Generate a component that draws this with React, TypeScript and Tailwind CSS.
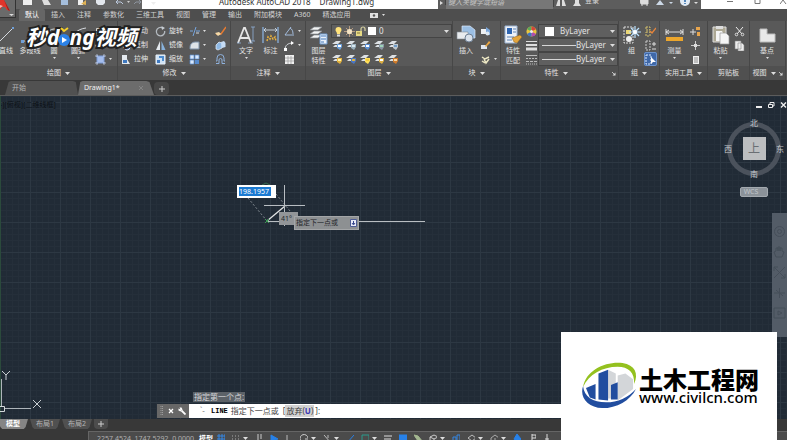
import type { ReactNode } from "react";

const UI = "font-['Noto_Sans','Noto_Sans_CJK_SC',sans-serif]";

function Svg({ w = 11, h = 11, box, children }: { w?: number; h?: number; box?: string; children: ReactNode }) {
  return (
    <svg width={w} height={h} viewBox={box ?? `0 0 ${w} ${h}`} fill="none" className="shrink-0" aria-hidden="true">
      {children}
    </svg>
  );
}

function Arrow() {
  return (
    <Svg w={5} h={3}>
      <path d="M0 0h5L2.5 3z" fill="#dedede" />
    </Svg>
  );
}

function SmallArrow() {
  return (
    <Svg w={3} h={2}>
      <path d="M0 0h3L1.5 2z" fill="#dedede" />
    </Svg>
  );
}

function Launcher() {
  return (
    <Svg w={5} h={5}>
      <path d="M1 1l2 2" stroke="#ddd" strokeWidth=".8" />
      <path d="M4.500 1.500v3h-3z" fill="#ddd" />
    </Svg>
  );
}

const icons = {
  line: <Svg w={20} h={20}><path d="M3 17L17 3" stroke="#d5d9de" /><path d="M2 16h2v2H2zM16 2h2v2h-2z" fill="#6f9fd8" /></Svg>,
  polyline: <Svg w={20} h={20}><path d="M2 16h10a5 5 0 000-10" stroke="#d5d9de" /><path d="M1 15h3v3H1z" fill="#6f9fd8" /></Svg>,
  circle: <Svg w={20} h={20}><circle cx="10" cy="11" r="7" stroke="#d5d9de" /><path d="M10 11l5-5" stroke="#6f9fd8" /></Svg>,
  arc: <Svg w={20} h={20}><path d="M3 18C3 10 9 4 18 3" stroke="#d5d9de" /><path d="M2 16h3v3H2zM7 7h3v3H7z" fill="#6f9fd8" /></Svg>,
  rect: <Svg><path d="M1.500 2.500h8v6h-8z" stroke="#d5d9de" /></Svg>,
  ellipse: <Svg><ellipse cx="5.500" cy="5.500" rx="4.500" ry="3" stroke="#d5d9de" /></Svg>,
  hatch: <Svg><path d="M2 2h7v7H2z" fill="#a5bdec" stroke="#7d9cd8" /><path d="M0 2h3M2 0v3M8 9h3M9 8v3M8 2h3M9 0v3M0 9h3M2 8v3" stroke="#c5d4f0" strokeWidth=".7" /></Svg>,
  move: <Svg><path d="M5.500 0v11M0 5.500h11M4 2l1.500-1.500L7 2M4 9l1.500 1.500L7 9M2 4L.5 5.500 2 7M9 4l1.500 1.500L9 7" stroke="#dce3ea" /></Svg>,
  copy: <Svg><circle cx="4" cy="4" r="3" stroke="#dce3ea" /><circle cx="7" cy="7" r="3" fill="#5a86c8" stroke="#dce3ea" /></Svg>,
  stretch: <Svg><path d="M2 1h5v4l3 5H2z" fill="#e4e9ee" /><path d="M3 6h4v3H3z" fill="#3f79c0" /></Svg>,
  rotate: <Svg><path d="M7.500 1.900A4.200 4.200 0 109.700 5" stroke="#b4bac0" strokeWidth="1.300" /><path d="M6.500 0l3.500 2-3 2z" fill="#c8ced5" /></Svg>,
  mirror: <Svg><path d="M5 1v9H1z" fill="#e4e9ee" /><path d="M6.500 1v9h4z" fill="#88b2dc" /></Svg>,
  scale: <Svg><path d="M1 1h9v9H1z" fill="#cfe2f5" stroke="#e9f1f9" /><path d="M4 2h5v5H7V4H4z" fill="#4d8cce" /><path d="M2 6h3v3H2z" fill="#3f79c0" /></Svg>,
  trim: <Svg><path d="M1 5h3M7 5h4M4 10L7 1" stroke="#77a6df" /><path d="M7 7h3" stroke="#d5d9de" /></Svg>,
  fillet: <Svg><path d="M1 9V7a5 5 0 015-5h4v7z" fill="#dfe4e8" stroke="#7c91a8" /></Svg>,
  array: <Svg><path d="M1 1h4v4H1zM6 1h4v4H6zM1 6h4v4H1z" fill="#d9e8fb" stroke="#578bce" strokeWidth=".7" /><path d="M6 6h4v4H6z" fill="#578bce" /></Svg>,
  erase: <Svg><path d="M1 8h5l5-7" stroke="#e77b31" strokeWidth="1.500" /><path d="M0 7l4-1 2 2-3 2z" fill="#f4d9a8" /></Svg>,
  explode: <Svg><path d="M1 5l3-3 3 1v5l-4 2-2-1z" fill="#8fb9e4" stroke="#e9f2fc" strokeWidth=".7" /><path d="M6 2l3-1 1.500 2v4L7 8z" fill="#c5dcf5" /></Svg>,
  offset: <Svg><path d="M1 9.500h3V6a1.500 1.500 0 013 0v3.500h3M1 7h1V4a3.500 3.500 0 017 0v3h1" stroke="#8fb1dc" /></Svg>,
  text: <Svg w={20} h={20}><path d="M2 18L8 3h1l6 15M4.500 13h8" stroke="#e6e6e6" strokeWidth="1.800" /><path d="M1 18h4M12 18h5M15 2h4M17 2v14M15 16h4" stroke="#8fb0d8" strokeWidth=".8" /></Svg>,
  dimension: <Svg w={20} h={20}><path d="M2 2v16M17 2v16" stroke="#8db6e6" strokeWidth="1.200" /><path d="M3 5h13M5 3L3 5l2 2M14 3l2 2-2 2" stroke="#dbe7f4" strokeWidth=".8" /><path d="M6 16l1-4 2 2 1-3 2 3 2-2 1 4" stroke="#eab23e" strokeWidth="1.500" strokeDasharray="2 1" /></Svg>,
  angle: <Svg><path d="M1 9h9M1 9l6-8M6 2c2 1 3 3 3 6" stroke="#a9c5e9" strokeWidth=".9" /></Svg>,
  leader: <Svg><path d="M1 10C1 5 4 3 9 3" stroke="#d5d9de" /><path d="M7 1l3 2-3 2zM0 8h3v3H0z" fill="#fff" /></Svg>,
  table: <Svg><path d="M1 1h9v9H1z" fill="#f0f0f0" /><path d="M1 4h9M1 7h9M4 2v8M7 2v8" stroke="#999" strokeWidth=".7" /></Svg>,
  layers: <Svg w={20} h={20}><path d="M1 5l4-3h8l-4 3zM1 9l4-3h8L9 9zM1 13l4-3h8l-4 3z" fill="#f3f4f4" stroke="#858a8f" strokeWidth=".7" /><path d="M11 9h7v10h-7z" fill="#eaf1fb" stroke="#6f9bd0" /><path d="M12 11h5M12 14h5M12 17h3" stroke="#4278b9" /></Svg>,
  bulb: <Svg><path d="M2.500 4a3 3 0 116 0c0 1.500-1.500 2-1.500 4H4c0-2-1.500-2.500-1.500-4z" fill="#ffe27a" /><path d="M4 8.500h3v2H4z" fill="#ddd" /></Svg>,
  sun: <Svg><path d="M5.500 0v11M0 5.500h11M2 2l7 7M9 2L2 9" stroke="#c9a888" strokeWidth=".8" /><circle cx="5.500" cy="5.500" r="2.600" fill="#f3e3c4" /></Svg>,
  lock: <Svg><path d="M6 5V3a2 2 0 014 0v2" stroke="#d5d0a0" strokeWidth="1.200" /><path d="M1 5h6v5H1z" fill="#e6d984" /><path d="M2 7h3" stroke="#817436" /></Svg>,
  insert: <Svg w={20} h={20}><path d="M6 1h8l5 4v8H6z" fill="#9bbfe4" stroke="#dceafb" strokeWidth=".7" /><path d="M1 7h11v7H1z" fill="#e8ebee" stroke="#828a94" strokeWidth=".6" /><circle cx="13" cy="13" r="4" fill="#d9e1ea" stroke="#6e8094" /></Svg>,
  block1: <Svg><path d="M1 3h6v5H1z" fill="#eef1f4" /><path d="M6 1l4 3v5H6z" fill="#7ba6d8" /><circle cx="7.500" cy="7.500" r="2" fill="#dde7f1" /></Svg>,
  block2: <Svg><path d="M1 5h6v4H1z" fill="#dfe7f0" /><path d="M5 6l4-5 1.500 1.500L6 7z" fill="#e8a541" /></Svg>,
  block3: <Svg><path d="M2 3l3 2 4-2M4 5l2 4 3-4M2 7l3 2" stroke="#ece7c3" strokeWidth="1.500" /></Svg>,
  match: <Svg w={20} h={20}><path d="M2 1h12v17H2z" fill="#eef2f8" stroke="#9cb5d5" /><path d="M4 3h5v6H4z" fill="#2f66b2" /><path d="M10 4h3M10 7h3M4 12h7M4 15h5" stroke="#5c83b6" /><path d="M9 13l8-3 2 2-5 6-3-1z" fill="#e4a53c" stroke="#8b5f19" strokeWidth=".5" /></Svg>,
  wheel: <Svg><circle cx="5.500" cy="5.500" r="5" fill="#e9c53f" /><path d="M5.500 5.500L1 3.300A5 5 0 015.500.5z" fill="#59a85d" /><path d="M5.500 5.500V.5A5 5 0 0110 3.300z" fill="#d6443c" /><path d="M5.500 5.500L10 8A5 5 0 015.500 10.500z" fill="#b04bb2" /><path d="M5.500 5.500v5A5 5 0 011 8z" fill="#3e74c5" /><circle cx="5.500" cy="5.500" r="1.500" fill="#eee" /></Svg>,
  weights: <Svg><path d="M0 1.500h11" stroke="#ddd" /><path d="M0 5h11" stroke="#ddd" strokeWidth="2" /><path d="M0 9h11" stroke="#ddd" strokeWidth="3" /></Svg>,
  dashes: <Svg><path d="M0 1.500h11" stroke="#bbb" /><path d="M0 4.500h11" stroke="#bbb" strokeDasharray="2 1" /><path d="M0 7.500h11" stroke="#bbb" strokeDasharray="3 1" /><path d="M0 10h11" stroke="#bbb" strokeDasharray="1 1" /></Svg>,
  group: <Svg w={20} h={20}><path d="M2 2h9v16H2z" stroke="#ddd" strokeDasharray="2 1" /><path d="M4 5h5v4H4z" fill="#ead675" /><circle cx="7" cy="14" r="3" fill="#eee" /><path d="M13 1v12M7 7h12M9 3l8 8M17 3l-8 8" stroke="#b9e1ff" strokeWidth="1.200" /><circle cx="13" cy="7" r="2" fill="#fff" /></Svg>,
  ungroup: <Svg><path d="M1 1h4v3H1zM1 6h4v4H1z" stroke="#d6c26c" strokeDasharray="2 1" /><path d="M5 5l2 2 4-5" stroke="#e8853a" strokeWidth="1.300" /></Svg>,
  groupEdit: <Svg><path d="M1 1h4v9H1z" stroke="#ccc" strokeDasharray="2 1" /><path d="M7 4h4M9 2v4M7 9h4" stroke="#ddd" /></Svg>,
  groupPick: <Svg><path d="M1 1h5v9H1z" stroke="#dceaff" strokeDasharray="2 1" /><path d="M6 3v7l2-2h3z" fill="#fff" /></Svg>,
  measure: <Svg w={20} h={20}><path d="M1 4v6M18 4v6M1 7h17M4 5L1 7l3 2M15 5l3 2-3 2" stroke="#ddd" /><path d="M1 12h17v4H1z" fill="#eca62c" /></Svg>,
  select: <Svg><path d="M0 6h6M3 3v6" stroke="#ddd" /><path d="M6 1h4v3H6zM7 6h3v4H7z" fill="#e8a54c" /></Svg>,
  point: <Svg><path d="M5.500 1v9M1 5.500h9" stroke="#ccc" /><path d="M4 4h3v3H4z" fill="#ddd" /></Svg>,
  calc: <Svg><path d="M3 2h6v8H3z" fill="#efefef" /><path d="M4 4h4M4 6h4M4 8h4" stroke="#777" strokeWidth=".8" /></Svg>,
  paste: <Svg w={20} h={20}><path d="M2 2h13v15H2z" fill="#ada894" stroke="#ddd" /><path d="M5 1h7v3H5z" fill="#ddd" /><path d="M5 6h6l1 2v8H5z" fill="#f5f5f5" /><path d="M9 8h6l3 3v8H9z" fill="#f5f5f5" stroke="#999" strokeWidth=".7" /></Svg>,
  cut: <Svg><path d="M2 1l6 7M9 1L3 8" stroke="#eee" /><circle cx="2.500" cy="8.500" r="1.300" stroke="#ddd" /><circle cx="8.500" cy="8.500" r="1.300" stroke="#ddd" /></Svg>,
  copyclip: <Svg><path d="M1 1h6v8H1zM4 3h4l2 2v6H4z" fill="#eee" stroke="#888" strokeWidth=".6" /></Svg>,
  base: <Svg w={20} h={20}><path d="M3 4h7v5h8v8H3z" fill="#e8e8e8" stroke="#bbb" /></Svg>,
};

function layerIcon(a: string, b: string) {
  return (
    <Svg>
      <path d="M0 4l4-3h5L6 4zM1 7l2-2h4L5 7z" fill="#dde1e5" />
      <path d="M5 4h5v3L8 10 5 8z" fill={a} />
      <path d="M6 5h3v2H6z" fill={b} />
    </Svg>
  );
}

const layerTools = [
  [["#6c9fd8", "#fff"], ["#9bb0bd", "#d8e6ee"], ["#5c8fd3", "#fff"], ["#8997a3", "#9ed4b8"], ["#bdc6cd", "#6f9cc9"]],
  [["#e2b13d", "#fff2a5"], ["#4c78c4", "#e1b43a"], ["#ffe05a", "#f3c93b"], ["#dcae42", "#fff"], ["#d07b2b", "#f8d9a5"]],
];

function Big({ icon, label, second, arrow, className }: { icon: ReactNode; label: string; second?: string; arrow?: boolean; className?: string }) {
  return (
    <button type="button" className={`flex shrink-0 flex-col items-center whitespace-nowrap text-[7px] leading-[10px] ${className ?? ""}`}>
      <span className="flex h-[22px] items-center">{icon}</span>
      <span>{label}</span>
      {second && <span>{second}</span>}
      {arrow && <span className="pt-px"><SmallArrow /></span>}
    </button>
  );
}

function Small({ icon, label, arrow, active }: { icon: ReactNode; label?: string; arrow?: boolean; active?: boolean }) {
  return (
    <button type="button" aria-label={label ?? "工具"} className={`flex h-[14px] items-center gap-[3px] whitespace-nowrap px-px text-[7px] leading-[10px] ${active ? "rounded-xs bg-[#3f68a8] outline-1 -outline-offset-1 outline-[#6c93cd]" : ""}`}>
      {icon}
      {label}
      {arrow && <SmallArrow />}
    </button>
  );
}

function Panel({ title, className, children, launcher, plain }: { title: string; className: string; children: ReactNode; launcher?: boolean; plain?: boolean }) {
  return (
    <section className={`flex shrink-0 flex-col border-r border-[#474747] ${className}`}>
      <div className="flex h-[45px] pt-[3px]">{children}</div>
      <div className="flex h-[14px] items-center bg-[#505050] text-[7px] leading-[10px]">
        <h2 className="flex flex-1 items-center justify-center gap-1 whitespace-nowrap">
          {title}
          {!plain && <Arrow />}
        </h2>
        {launcher && <span className="pr-[2px]"><Launcher /></span>}
      </div>
    </section>
  );
}

function PropertySelect({ label, value, kind }: { label: string; value: string; kind: "color" | "line" }) {
  return (
    <div className="flex h-[14px] items-center border border-[#444] bg-[#5f5f5f] pr-[2px]">
      {kind === "color" ? <span className="mx-[6px] size-[9px] bg-white" /> : <span className="ml-[3px] h-px w-[34px] bg-[#d6d6d6]" />}
      <select aria-label={label} className="min-w-0 flex-1 appearance-none bg-transparent text-[8px] leading-[12px] outline-none">
        <option>{value}</option>
      </select>
      <Arrow />
    </div>
  );
}

function TitleBar() {
  return (
    <header className="flex h-[9px] shrink-0 overflow-hidden bg-white">
      <div className="flex w-[142px] shrink-0 items-start gap-[10px] bg-[#656565] pl-[23px]">
        <Svg w={9} h={5}><path d="M0 0h9v5H0z" fill="#eee" /></Svg>
        <Svg w={9} h={5}><path d="M0 0h6l3 5H2z" fill="#ddd" /></Svg>
        <Svg w={7} h={5}><path d="M0 0h7v5H0z" fill="#a5bedc" /></Svg>
        <Svg w={8} h={5}><path d="M0 0h5v5H0z" fill="#eee" /><path d="M3 4l5-4v5z" fill="#e0b254" /></Svg>
        <Svg w={9} h={5}><path d="M0 0h9v3L7 5H2L0 3z" fill="#e3e7ed" /></Svg>
        <Svg w={42} h={5}><path d="M1 2h5l2 2M3 0L1 2l2 2" stroke="#bbc8dc" /><path d="M12 1h3l-1.500 2z" fill="#ccc" /><path d="M26 2h-5l-2 2M24 0l2 2-2 2" stroke="#8d949e" /><path d="M36 2h5l-2.500 3z" fill="#eee" /></Svg>
      </div>
      <h1 className="-mt-[5px] flex flex-1 gap-[9px] whitespace-pre pl-[77px] text-[8px] leading-[14px] text-[#333]">
        <span>Autodesk AutoCAD 2018</span>
        <span>Drawing1.dwg</span>
      </h1>
      <div className="flex w-[263px] shrink-0 items-start bg-[#5d5d5d] text-[7px] leading-[10px] text-[#d8d8d8]">
        <span className="w-[8px] border-r border-[#444] pl-[2px] pt-[1px]"><Svg w={3} h={4}><path d="M0 0l3 2-3 2z" fill="#ddd" /></Svg></span>
        <input aria-label="搜索" placeholder="键入关键字或短语" className="-mt-[4px] h-[13px] w-[107px] bg-[#777] pl-[2px] italic outline-none placeholder:text-[#c4c4c4]" />
        <span className="flex flex-1 gap-[7px] border-l border-[#444] pl-[2px]">
          <Svg w={10} h={6}><path d="M0 6l2-6h2v6zM6 6V0h2l2 6z" fill="#ddd" /></Svg>
          <Svg w={8} h={6}><path d="M2 0h4v3l2 3H0l2-3z" fill="#dedede" /></Svg>
          <button type="button" className="-mt-[4px] -ml-[3px] h-[10px]">登录</button>
          <span className="w-[27px]" />
          <Svg w={9} h={6}><path d="M0 0h8v4H1zM1 5h2M6 5h2" fill="#ddd" stroke="#ddd" /></Svg>
          <Svg w={17} h={6}><path d="M4 0L0 5h8zM13 2h4l-2 2z" fill="#ccd8e6" /></Svg>
          <Svg w={18} h={7}><circle cx="5" cy="1" r="5" fill="#e2ebf5" /><path d="M5 0v2M5 3v1" stroke="#2868a8" strokeWidth="1.500" /><path d="M14 2h4l-2 2z" fill="#ddd" /></Svg>
        </span>
      </div>
      <div className="flex w-[86px] shrink-0 items-start justify-between pl-[26px]">
        <button type="button" aria-label="最小化" className="flex"><Svg w={7} h={5}><path d="M0 1.500h6" stroke="#777" /></Svg></button>
        <button type="button" aria-label="还原" className="flex"><Svg w={7} h={5}><path d="M1 0v3.500h5V0" stroke="#777" /></Svg></button>
        <button type="button" aria-label="关闭" className="flex"><Svg w={7} h={5}><path d="M0 4l3-4 3 4" stroke="#777" /></Svg></button>
      </div>
    </header>
  );
}

const menus = ["默认", "插入", "注释", "参数化", "三维工具", "视图", "管理", "输出", "附加模块", "A360", "精选应用"];

function MenuTabs() {
  return (
    <nav className="flex h-[12px] shrink-0 items-stretch bg-[#4e4e4e] pl-[19px] text-[7px] leading-[12px] text-[#d2d2d2]">
      {menus.map((m, i) => (
        <button type="button" key={m} className={`whitespace-nowrap px-[6px] ${i === 0 ? "rounded-t-xs bg-[#666] text-white" : ""}`}>{m}</button>
      ))}
      <button type="button" aria-label="显示选项" className="flex items-center gap-1 pl-[13px]">
        <Svg w={8} h={5}><path d="M0 0h8v5H0z" fill="#e2e2e2" /><circle cx="4" cy="2.500" r="1.200" fill="#555" /></Svg>
        <SmallArrow />
      </button>
    </nav>
  );
}

function Ribbon() {
  return (
    <div className="flex h-[59px] shrink-0 overflow-hidden bg-[#595959] text-[#e3e3e3]">
      <Panel title="绘图" className="w-[118px]">
        <Big icon={icons.line} label="直线" className="-ml-[4px] w-[20px]" />
        <Big icon={icons.polyline} label="多段线" className="w-[28px]" />
        <Big icon={icons.circle} label="圆" arrow className="w-[20px]" />
        <Big icon={icons.arc} label="圆弧" arrow className="w-[28px]" />
        <div className="flex flex-col pl-[2px]">
          <Small icon={icons.rect} arrow />
          <Small icon={icons.ellipse} arrow />
          <Small icon={icons.hatch} arrow />
        </div>
      </Panel>
      <Panel title="修改" className="w-[113px]">
        <div className="flex w-[36px] flex-col pl-px">
          <Small icon={icons.move} label="移动" />
          <Small icon={icons.copy} label="复制" />
          <Small icon={icons.stretch} label="拉伸" />
        </div>
        <div className="flex w-[34px] flex-col">
          <Small icon={icons.rotate} label="旋转" />
          <Small icon={icons.mirror} label="镜像" />
          <Small icon={icons.scale} label="缩放" />
        </div>
        <div className="flex w-[26px] flex-col">
          <Small icon={icons.trim} arrow />
          <Small icon={icons.fillet} arrow />
          <Small icon={icons.array} arrow />
        </div>
        <div className="flex flex-col">
          <Small icon={icons.erase} />
          <Small icon={icons.explode} />
          <Small icon={icons.offset} />
        </div>
      </Panel>
      <Panel title="注释" className="w-[75px]">
        <Big icon={icons.text} label="文字" arrow className="ml-[3px] w-[24px]" />
        <Big icon={icons.dimension} label="标注" className="w-[25px]" />
        <div className="flex flex-col">
          <Small icon={icons.angle} arrow />
          <Small icon={icons.leader} arrow />
          <Small icon={icons.table} />
        </div>
      </Panel>
      <Panel title="图层" className="w-[147px]">
        <Big icon={icons.layers} label="图层" second="特性" className="w-[25px]" />
        <div className="flex flex-1 flex-col">
          <div className="flex h-[14px] items-center border border-[#444] bg-[#5f5f5f] pl-px pr-[2px]">
            {icons.bulb}{icons.sun}{icons.lock}
            <span className="mx-[2px] size-[8px] bg-white" />
            <select aria-label="图层" className="min-w-0 flex-1 appearance-none bg-transparent pl-px text-[8px] leading-[12px] outline-none">
              <option>0</option>
            </select>
            <Arrow />
          </div>
          {layerTools.map((row, r) => (
            <div key={r} className="flex h-[14px] gap-px">
              {row.map(([a, b]) => <Small key={a} icon={layerIcon(a, b)} />)}
            </div>
          ))}
        </div>
      </Panel>
      <Panel title="块" className="w-[48px]">
        <Big icon={icons.insert} label="插入" className="w-[26px]" />
        <div className="flex flex-col">
          <Small icon={icons.block1} />
          <Small icon={icons.block2} />
          <Small icon={icons.block3} arrow />
        </div>
      </Panel>
      <Panel title="特性" className="w-[118px]" launcher>
        <Big icon={icons.match} label="特性" second="匹配" className="w-[24px]" />
        <div className="flex flex-col">
          <Small icon={icons.wheel} />
          <Small icon={icons.weights} />
          <Small icon={icons.dashes} />
        </div>
        <div className="flex min-w-0 flex-1 flex-col">
          <PropertySelect label="颜色" value="ByLayer" kind="color" />
          <PropertySelect label="线宽" value="ByLayer" kind="line" />
          <PropertySelect label="线型" value="ByLayer" kind="line" />
        </div>
      </Panel>
      <Panel title="组" className="w-[41px]">
        <Big icon={icons.group} label="组" className="w-[25px]" />
        <div className="flex flex-col">
          <Small icon={icons.ungroup} />
          <Small icon={icons.groupEdit} />
          <Small icon={icons.groupPick} active />
        </div>
      </Panel>
      <Panel title="实用工具" className="w-[48px]">
        <Big icon={icons.measure} label="测量" arrow className="w-[29px]" />
        <div className="flex flex-col">
          <Small icon={icons.select} />
          <Small icon={icons.point} />
          <Small icon={icons.calc} />
        </div>
      </Panel>
      <Panel title="剪贴板" className="w-[42px]" plain>
        <Big icon={icons.paste} label="粘贴" arrow className="w-[25px]" />
        <div className="flex flex-col">
          <Small icon={icons.cut} />
          <Small icon={icons.copyclip} />
        </div>
      </Panel>
      <Panel title="视图" className="w-[36px]" launcher>
        <Big icon={icons.base} label="基点" arrow className="w-[34px]" />
      </Panel>
    </div>
  );
}

function DocumentTabs() {
  return (
    <div className="flex h-[16px] shrink-0 items-end border-b border-[#5c5c5c] bg-[#383838] pl-[5px] text-[7px] leading-[14px]">
      <button type="button" className="h-[14px] w-[73px] bg-[#515151] pl-[7px] text-left text-[#b4b4b4] [clip-path:polygon(0_100%,5%_8%,8%_0,93%_0,97%_8%,100%_100%)]">开始</button>
      <button type="button" className="flex h-[14px] w-[76px] items-center justify-between bg-[#6c6c6c] pl-[6px] pr-[11px] text-[#f2f2f2] [clip-path:polygon(0_100%,3%_8%,6%_0,90%_0,94%_8%,100%_100%)]">
        Drawing1*
        <Svg w={4} h={4}><path d="M0 0l4 4M4 0L0 4" stroke="#858585" /></Svg>
      </button>
      <button type="button" aria-label="新图形" className="flex h-[13px] w-[15px] items-center justify-center rounded-sm bg-[#484848]">
        <Svg w={6} h={6}><path d="M3 0v6M0 3h6" stroke="#ccc" /></Svg>
      </button>
    </div>
  );
}

function Drawing() {
  return (
    <svg className="absolute left-0 top-0" width="440" height="150" viewBox="0 96 440 150" fill="none" aria-hidden="true">
      <path d="M267 221.500h158" stroke="#b9bec2" />
      <path d="M267 221l18-15" stroke="#e3e5e6" strokeWidth="1.300" />
      <path d="M248 198l19 23M276 194l14 17" stroke="#9aa1a7" strokeWidth=".8" strokeDasharray="2 2" />
      <path d="M262 185l4-2 4 2" stroke="#3b7d55" strokeWidth=".8" />
      <path d="M265 219l4 4M269 219l-4 4" stroke="#3d9b55" />
      <path d="M264 205.500h41M284.500 185v41" stroke="#b8bdc2" />
    </svg>
  );
}

function ViewCube() {
  return (
    <div className="absolute right-[3px] top-[22px] flex w-[60px] flex-col items-center text-[8px] leading-[10px] text-[#c4c9cd]">
      <svg className="absolute left-[2px] top-[3px]" width="56" height="56" fill="none" aria-hidden="true">
        <circle cx="28" cy="28" r="24.500" stroke="#4b525c" strokeWidth="5" />
      </svg>
      <span className="relative">北</span>
      <div className="relative flex h-[41px] w-full items-center justify-between">
        <span>西</span>
        <button type="button" className="size-[23px] bg-[#bcbec0] text-[12px] leading-[22px] text-[#6a6e73]">上</button>
        <span>东</span>
      </div>
      <span className="relative">南</span>
      <button type="button" className="mt-[8px] h-[10px] w-[28px] rounded-xs border border-[#a3a9af] bg-[#8b9299] pr-[6px] text-[7px] leading-[8px] text-[#c0c5ca]">WCS</button>
    </div>
  );
}

function NavigationBar() {
  return (
    <div className="absolute right-0 top-[117px] flex h-[124px] w-[15px] flex-col items-center gap-[8px] bg-[#535c67] pt-[12px]">
      <Svg w={13} h={13}><circle cx="6.500" cy="6.500" r="5" stroke="#454e59" /><circle cx="6.500" cy="6.500" r="2" stroke="#454e59" /></Svg>
      <Svg w={13} h={12}><path d="M3 11L1 6l2-1V2h2v3-4h2v4-3h2v3l2 1-2 5z" stroke="#454e59" /></Svg>
      <Svg w={13} h={13}><path d="M1 1l11 11M12 1L1 12M1 5V1h4M8 12h4V8" stroke="#454e59" /></Svg>
      <Svg w={13} h={12}><path d="M1 6h11M6.500 1v10M3 3l7 6" stroke="#454e59" /></Svg>
      <Svg w={13} h={12}><path d="M1 1h11v10H1zM5 4l4 2-4 2z" stroke="#454e59" /></Svg>
    </div>
  );
}

function CommandLine() {
  return (
    <div className="absolute bottom-0 left-[157px] right-[220px] pb-px">
      <p className="mb-[2px] ml-[36px] w-fit bg-[#5c6268] px-px text-[8px] leading-[10px] text-[#d4d6d8]">指定第一个点:</p>
      <div className="flex h-[14px] bg-white">
        <div className="flex w-[32px] shrink-0 items-center justify-between bg-[#676767] px-[3px]">
          <Svg w={3} h={10}><path d="M1 0v10M2.500 0v10" stroke="#aaa" strokeWidth=".8" strokeDasharray="1 1" /></Svg>
          <button type="button" aria-label="关闭命令行"><Svg w={6} h={6}><path d="M1 1l4 4M5 1L1 5" stroke="#fff" strokeWidth="1.300" /></Svg></button>
          <button type="button" aria-label="自定义"><Svg w={8} h={8}><path d="M3.500 3.500l4 4" stroke="#fff" strokeWidth="1.800" /><path d="M.5 1.500v2l2 1 2-2-1-2h-2l1 2z" fill="#fff" /></Svg></button>
        </div>
        <label className="flex min-w-0 flex-1 items-center pl-[4px] text-[8px] leading-[12px] text-[#444]">
          <span className="w-[18px] pl-[7px] text-[#888]">`-</span>
          <span className="font-['Liberation_Mono','Noto_Sans_CJK_SC',monospace] text-[7px] font-bold text-black">LINE</span>
          <span className="whitespace-pre pl-[3px]">指定下一点或</span>
          <span className="whitespace-pre pl-[4px]">[</span>
          <span className="whitespace-pre bg-[#d2d2d2] px-px">放弃(<b className="font-bold text-[#3b3bb5]">U</b>)</span>
          <span className="pl-px">]:</span>
          <input aria-label="命令" className="min-w-0 flex-1 bg-transparent outline-none" />
        </label>
      </div>
    </div>
  );
}

function Canvas() {
  return (
    <main className="relative min-h-0 flex-1 overflow-hidden bg-[#212b36] bg-[linear-gradient(to_right,#2d3843_1px,transparent_1px),linear-gradient(to_bottom,#2d3843_1px,transparent_1px),linear-gradient(to_right,#252f3a_1px,transparent_1px),linear-gradient(to_bottom,#252f3a_1px,transparent_1px)] bg-[size:30px_30px,30px_30px,6px_6px,6px_6px] bg-[position:0px_6px]">
      <p className="absolute left-0 top-[3px] whitespace-nowrap text-[7px] leading-[12px] text-[#0c1116]">-][俯视][二维线框]</p>
      <Drawing />
      <input aria-label="长度" defaultValue="198.1957" className="absolute left-[237px] top-[89px] h-[13px] w-[39px] border-2 border-r-[5px] border-white bg-[#1b7ad2] text-[7px] leading-[9px] text-white outline-none" />
      <span className="absolute left-[279px] top-[116px] h-[13px] w-[19px] bg-[#929598] pl-[2px] text-[7px] leading-[13px] text-[#22272b]">41°</span>
      <div className="absolute left-[294px] top-[120px] flex h-[14px] w-[65px] items-center justify-between border border-[#a4a6a8] bg-[#8d9092] px-px text-[7px] leading-[12px] text-[#1e2327]">
        指定下一点或
        <Svg w={7} h={8}><path d="M.5.5h6v7h-6z" fill="#e8ebf8" stroke="#4e5c94" /><path d="M3.500 2v3M2 4l1.500 2L5 4" stroke="#35458c" /></Svg>
      </div>
      <div className="absolute right-0 top-[5px] flex items-center gap-[5px]">
        <button type="button" aria-label="最小化图形"><Svg w={7} h={8}><path d="M0 6h6" stroke="#eee" strokeWidth="2" /></Svg></button>
        <button type="button" aria-label="还原图形"><Svg w={7} h={8}><path d="M2 3V1.500h4V5H5M.5 3.500h4v3h-4z" stroke="#eee" /></Svg></button>
        <button type="button" aria-label="关闭图形"><Svg w={7} h={8}><path d="M1 1.500l5 5M6 1.500l-5 5" stroke="#eee" strokeWidth="1.400" /></Svg></button>
      </div>
      <ViewCube />
      <NavigationBar />
      <span className="absolute left-0 top-0 h-full w-px bg-[#2b4a3c]" />
      <svg className="absolute bottom-px left-0" width="46" height="48" fill="none" aria-hidden="true">
        <path d="M1.500 9v27M5 38.500h26" stroke="#aeb5ba" />
        <path d="M0 36.500h4.500v5H0" stroke="#d4d8da" />
        <path d="M2 1l4 4 4-4M6 5v5M33 30l8 8M41 30l-8 8" stroke="#c9ced2" />
      </svg>
      <CommandLine />
    </main>
  );
}

function LayoutTabs() {
  const shape = "h-[10px] w-[30px] [clip-path:polygon(0_0,100%_0,92%_80%,86%_100%,14%_100%,8%_80%)]";
  return (
    <div className="flex h-[12px] shrink-0 gap-[2px] bg-[#383838] text-[7px] leading-[10px] text-[#b5b5b5]">
      <button type="button" className={`${shape} -ml-[2px] bg-[#858585] font-bold text-white`}>模型</button>
      <button type="button" className={`${shape} bg-[#505050]`}>布局1</button>
      <button type="button" className={`${shape} bg-[#505050]`}>布局2</button>
      <button type="button" aria-label="新建布局" className="flex h-[10px] w-[14px] items-center justify-center rounded-b-sm bg-[#4c4c4c]">
        <Svg w={6} h={6}><path d="M3 0v6M0 3h6" stroke="#ccc" /></Svg>
      </button>
    </div>
  );
}

const statusIcons: { d: string; c: string; arrow?: boolean; fill?: boolean }[] = [
  { d: "M0 2h9M0 5h9M0 8h9M2 0v9M5 0v9M8 0v9", c: "#3587e4" },
  { d: "M0 2h1M3 2h1M6 2h1M0 5h1M3 5h1M6 5h1M0 8h1M3 8h1", c: "#aaa", arrow: true },
  { d: "M3 0v9M6 0v5", c: "#ccc" },
  { d: "M1 1l7 4-7 2z", c: "#2781e8", fill: true },
  { d: "M2 1v7h6", c: "#bbb" },
  { d: "M8 4a4 4 0 10-2 4M5 5h4", c: "#ccc", arrow: true },
  { d: "M1 1l7 8M5 1v3", c: "#bbb", arrow: true },
  { d: "M1 9l7-8", c: "#2781e8" },
  { d: "M1 1h7v7H1z", c: "#2b9b8c", arrow: true },
  { d: "M0 2h9M0 5h7M0 8h9", c: "#ddd" },
  { d: "M0 1h9v8H0z", c: "#2781e8", fill: true },
  { d: "M0 1l4 1 5 6-5-1z", c: "#a4b891", fill: true },
  { d: "M1 3l4-2 4 2v5H1zM1 3l4 2 4-2M5 5v4", c: "#ccc", arrow: true },
  { d: "M1 8V3h3v5M5 8V1h3v7", c: "#3587e4" },
  { d: "M1 4l4-3 4 3-4 3z", c: "#bbb", arrow: true },
  { d: "M1 4l4-3 4 3v4H1zM4 5h2", c: "#aaa", arrow: true },
  { d: "M4 0l4 5-4 4-3-4z", c: "#2781e8", fill: true },
  { d: "M4 0v9M4 1h4v3H4", c: "#ddd" },
  { d: "M4 0v9M2 5h4", c: "#ddd" },
];

function StatusBar() {
  return (
    <footer className="flex h-[9px] shrink-0 overflow-hidden bg-[#383838] pl-[88px]">
      <div className="flex flex-1 items-start border-l border-t border-[#656565] bg-[#4b4b4b] pl-[8px] pt-[2px]">
        <span className="w-[102px] shrink-0 whitespace-nowrap text-[7px] leading-[10px] text-[#b0b0b0]">2257.4524, 1747.5292, 0.0000</span>
        <button type="button" className="mr-[4px] shrink-0 text-[7px] leading-[10px] font-bold text-white">模型</button>
        <div className="flex gap-[7px]">
          {statusIcons.map((s, i) => (
            <button type="button" aria-label="状态开关" key={i} className="flex items-center gap-[3px]">
              <Svg w={8} h={9}><path d={s.d} stroke={s.c} fill={s.fill ? s.c : "none"} /></Svg>
              {s.arrow && <Arrow />}
            </button>
          ))}
        </div>
      </div>
    </footer>
  );
}

function AppMenu() {
  return (
    <button type="button" aria-label="应用程序菜单" className="absolute left-0 top-0 h-[18px] w-[16px] border-b border-r border-[#333] bg-[#6a6a6a]">
      <Svg w={15} h={17}>
        <path d="M0 0h4l6 11-3-1-2-3H2l-2 3z" fill="#e0342b" />
        <path d="M4 0l6 11-2-1z" fill="#9c1d1a" />
        <path d="M0 5l3 1-3 2z" fill="#f7b9b3" />
        <path d="M9 14h5l-2.500 2z" fill="#ddd" />
      </Svg>
    </button>
  );
}

function VideoMark() {
  const stroke = "[-webkit-text-stroke:4px_#222] [paint-order:stroke_fill]";
  return (
    <div className="absolute left-[26px] top-[24px] flex items-center font-['Noto_Sans','Noto_Sans_CJK_SC',sans-serif] text-[21px] leading-[26px] font-bold italic text-white">
      <span className={stroke}>秒</span>
      <span className={stroke}>d</span>
      <svg width="12" height="20" className="relative -mx-px" fill="none" aria-hidden="true">
        <path d="M3 1l3 3 4-3" stroke="#f5cf2b" strokeWidth="2" />
        <circle cx="6" cy="13" r="6" fill="#2b82e8" />
        <path d="M4 10l5 3-5 3z" fill="#fff" />
      </svg>
      <span className={stroke}>ng</span>
      <span className={stroke}>视频</span>
    </div>
  );
}

function SiteMark() {
  return (
    <aside className="absolute bottom-0 right-[10px] flex h-[108px] w-[216px] items-center bg-white pl-[20px]">
      <svg width="58" height="50" viewBox="0 0 60 52" fill="none" className="shrink-0" aria-hidden="true">
        <path d="M28 9l8 4v26h-8zM38 15l8-2 8 6v10l-16 12z" fill="#d3d6d9" />
        <path d="M5 28l10-4v16l-6-2z" fill="#214d9f" />
        <path d="M18 13l10-4v32l-10-1z" fill="#214d9f" />
        <path d="M31 25l7-3v18h-7z" fill="#214d9f" />
        <path d="M2 27C5 9 26 0 43 2c13 2 17 11 12 22C56 12 49 6 38 6 22 6 8 14 2 27z" fill="#94c11f" />
        <path d="M2 26c-4 12 5 22 20 23 15 0 29-8 35-20-8 9-19 14-31 14C12 43 3 37 2 26z" fill="#214d9f" />
      </svg>
      <div className="flex flex-col text-black">
        <strong className="whitespace-nowrap font-['Noto_Sans_CJK_SC',sans-serif] text-[24px] leading-[22px] font-black">土木工程网</strong>
        <a href="#" className="font-['Noto_Sans',sans-serif] text-[15px] leading-[14px] font-medium">www.civilcn.com</a>
      </div>
    </aside>
  );
}

export default function App() {
  return (
    <div className={`relative flex h-screen flex-col overflow-hidden bg-[#383838] ${UI}`}>
      <TitleBar />
      <MenuTabs />
      <Ribbon />
      <DocumentTabs />
      <Canvas />
      <LayoutTabs />
      <StatusBar />
      <AppMenu />
      <VideoMark />
      <SiteMark />
    </div>
  );
}
